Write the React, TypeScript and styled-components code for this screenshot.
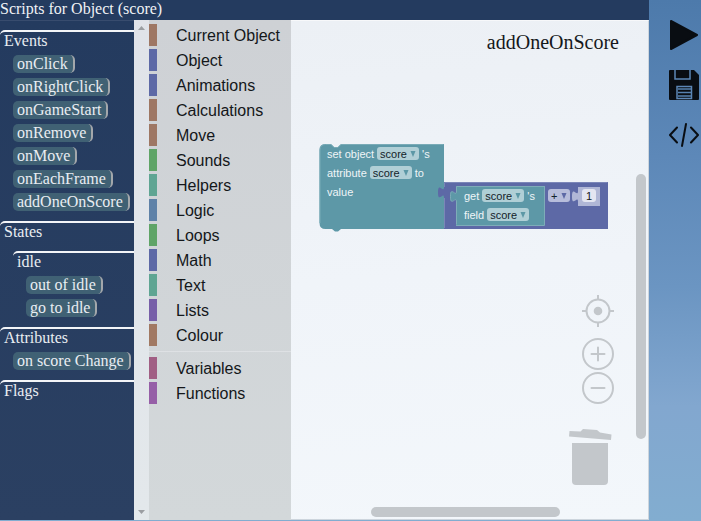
import React from "react";
import styled, { createGlobalStyle } from "styled-components";

const GlobalStyle = createGlobalStyle`
  *, *::before, *::after { box-sizing: border-box; }
  body { margin: 0; }
  button, input, select { font: inherit; color: inherit; margin: 0; }
`;

const serif = `"Liberation Serif", "Times New Roman", serif`;
const sans = `"Liberation Sans", Arial, sans-serif`;

const Page = styled.div`
  display: flex;
  height: 100vh;
  padding-bottom: 1px;
  font-family: ${serif};
  font-size: 16px;
  background: linear-gradient(180deg, #4d7aab 0%, #5d88b8 30%, #6b95c2 55%, #82a7cf 78%, #82add0 100%);
`;

const Editor = styled.main`
  flex: 1;
  min-width: 0;
  display: flex;
  flex-direction: column;
`;

const Header = styled.h1`
  margin: 0;
  height: 20px;
  line-height: 18px;
  font-size: 16px;
  font-weight: 400;
  color: #f0f2f5;
  background: #243b5f;
`;

const Body = styled.div`
  flex: 1;
  min-height: 0;
  display: flex;
`;

const Sidebar = styled.nav`
  width: 134px;
  padding-top: 9px;
  border-top: 1px solid #384c6e;
  background: linear-gradient(#243b5f, #2b4062);
  color: #e9edf2;
  overflow: hidden;
`;

const Section = styled.section<{ $nested?: boolean }>`
  margin-left: ${(p) => (p.$nested ? 13 : 0)}px;
  margin-top: ${(p) => (p.$nested ? 5 : 0)}px;
  padding-bottom: ${(p) => (p.$nested ? 0 : 5)}px;
  border-top: 2px solid #f3f5f8;
  border-top-left-radius: 5px;
`;

const SectionTitle = styled.h2`
  margin: 0;
  padding-left: 4px;
  height: 23px;
  line-height: 18px;
  font-size: 16px;
  font-weight: 400;
`;

const ScriptList = styled.ul`
  list-style: none;
  margin: 0;
  padding: 0 0 0 13px;
`;

const ScriptItem = styled.li`
  display: flex;
  height: 23px;
`;

const ScriptButton = styled.button`
  height: 18px;
  padding: 0 5px 0 4px;
  border: 0;
  border-right: 2px solid #a3a7ab;
  border-radius: 5px;
  background: #406174;
  line-height: 18px;
  white-space: nowrap;
  cursor: pointer;
`;

const ScrollGutter = styled.div`
  width: 15px;
  padding: 6px 4px;
  display: flex;
  flex-direction: column;
  justify-content: space-between;
  background: linear-gradient(#e0e3e9, #e3e8eb);
`;

const Toolbox = styled.ul`
  width: 142px;
  margin: 0;
  padding: 4px 0 0;
  list-style: none;
  font-family: ${sans};
  color: #14171a;
  background: linear-gradient(#ced1d5, #d3d8da);
`;

const Category = styled.li`
  height: 25px;
`;

const Separator = styled.li`
  height: 8px;
  padding-top: 2px;

  &::before {
    content: "";
    display: block;
    height: 1px;
    background: #dee1e4;
  }
`;

const CategoryButton = styled.button<{ $color: string }>`
  width: 100%;
  height: 22px;
  padding: 2px 0 0 19px;
  border: 0;
  border-left: 8px solid ${(p) => p.$color};
  background: none;
  text-align: left;
  line-height: 20px;
  white-space: nowrap;
  cursor: pointer;
`;

const Workspace = styled.section`
  flex: 1;
  min-width: 0;
  position: relative;
  border: 1px solid #cdd5dd;
  border-left: 0;
  border-top-color: #f7f8fa;
  background: linear-gradient(175deg, #ecf0f5, #f0f4f9 50%, #f3f7fb);
`;

const ScriptName = styled.h2`
  margin: 0;
  padding: 9px 29px 0 0;
  text-align: right;
  font-size: 20px;
  line-height: 24px;
  font-weight: 400;
  color: #15181b;
`;

const BlockGroup = styled.div`
  position: absolute;
  left: 28px;
  top: 123px;
  width: 290px;
  height: 88px;
  display: flex;
  font-family: ${sans};
  font-size: 11px;
  color: #eff5f7;
`;

const BlockShapes = styled.svg`
  position: absolute;
  inset: 0;
`;

const StatementBlock = styled.div`
  position: relative;
  width: 125px;
  padding-left: 8px;
`;

const MathBlock = styled.div`
  position: relative;
  display: flex;
  align-items: flex-start;
  padding: 42px 0 0 12px;
`;

const GetterBlock = styled.div`
  width: 88px;
  padding-left: 8px;
`;

const OperatorSlot = styled.div`
  width: 34px;
  padding-left: 4px;
`;

const BlockRow = styled.div`
  height: 19px;
  display: flex;
  align-items: center;
  gap: 3px;
  white-space: nowrap;
`;

const FieldWrap = styled.span`
  position: relative;
  display: flex;
`;

const FieldSelect = styled.select<{ $color: string }>`
  appearance: none;
  height: 13px;
  line-height: 12px;
  padding: 1px 12px 0 3px;
  border: 0;
  border-radius: 3px;
  background: ${(p) => p.$color};
  color: #14232a;
`;

const FieldArrow = styled.svg`
  position: absolute;
  right: 3px;
  top: 4px;
  pointer-events: none;
`;

const NumberInput = styled.input`
  width: 14px;
  height: 13px;
  margin-left: 4px;
  padding: 0;
  border: 0;
  border-radius: 3px;
  text-align: center;
  background: #e4e6f1;
  color: #15181b;
`;

const Controls = styled.div`
  position: absolute;
  right: 34px;
  bottom: 33px;
  display: flex;
  flex-direction: column;
  align-items: flex-end;
  gap: 2px;
`;

const ControlButton = styled.button<{ $gap?: number }>`
  display: flex;
  padding: 0;
  border: 0;
  margin-bottom: ${(p) => p.$gap ?? 0}px;
  background: none;
  color: #c3c7cb;
  cursor: pointer;
`;

const TrashIcon = styled.svg`
  margin-right: 2px;
`;

const VerticalBar = styled.div`
  position: absolute;
  right: 2px;
  top: 153px;
  bottom: 80px;
  width: 10px;
  border-radius: 5px;
  background: #c3c7cb;
`;

const HorizontalBar = styled.div`
  position: absolute;
  bottom: 2px;
  left: 80px;
  right: 88px;
  height: 10px;
  border-radius: 5px;
  background: #c3c7cb;
`;

const Rail = styled.aside`
  width: 52px;
  padding: 20px 2px 0 20px;
  display: flex;
  flex-direction: column;
  gap: 20px;
`;

const RailButton = styled.button`
  display: flex;
  width: 30px;
  height: 30px;
  padding: 0;
  border: 0;
  background: none;
  color: #090d12;
  cursor: pointer;
`;

const events = ["onClick", "onRightClick", "onGameStart", "onRemove", "onMove", "onEachFrame", "addOneOnScore"];

const categories = [
  { name: "Current Object", color: "#9e7764" },
  { name: "Object", color: "#5d69a6" },
  { name: "Animations", color: "#5d69a6" },
  { name: "Calculations", color: "#9e7764" },
  { name: "Move", color: "#9e7764" },
  { name: "Sounds", color: "#5fa467" },
  { name: "Helpers", color: "#5fa593" },
  { name: "Logic", color: "#5f82a8" },
  { name: "Loops", color: "#5fa467" },
  { name: "Math", color: "#5d69a6" },
  { name: "Text", color: "#5fa593" },
  { name: "Lists", color: "#775fa8" },
  { name: "Colour", color: "#a17963" },
];

const programCategories = [
  { name: "Variables", color: "#a15f84" },
  { name: "Functions", color: "#965fa7" },
];

function Scripts({ names }: { names: string[] }) {
  return (
    <ScriptList>
      {names.map((name) => (
        <ScriptItem key={name}>
          <ScriptButton type="button">{name}</ScriptButton>
        </ScriptItem>
      ))}
    </ScriptList>
  );
}

function Categories({ items }: { items: { name: string; color: string }[] }) {
  return (
    <>
      {items.map((c) => (
        <Category key={c.name}>
          <CategoryButton type="button" $color={c.color}>
            {c.name}
          </CategoryButton>
        </Category>
      ))}
    </>
  );
}

function Field({ value, label, math }: { value: string; label: string; math?: boolean }) {
  return (
    <FieldWrap>
      <FieldSelect aria-label={label} defaultValue={value} $color={math ? "#b7bddb" : "#b0cfd6"}>
        <option>{value}</option>
      </FieldSelect>
      <FieldArrow width="6" height="6" viewBox="0 0 6 6" aria-hidden="true">
        <path d="M0.500 0H5.500L3 6Z" fill={math ? "#5d69a6" : "#5c98a6"} />
      </FieldArrow>
    </FieldWrap>
  );
}

function Blocks() {
  return (
    <BlockGroup>
      <BlockShapes width="290" height="88" viewBox="0 0 290 88" aria-hidden="true">
        <path
          d="M0.500 6Q0.500 0 6.500 0H12L15 3H19L22 0H125V85H22L19 87.500H16L13 85H6.500Q0.500 85 0.500 79Z"
          fill="#5d98a7"
        />
        <path d="M1 79V6Q1 0.500 6.500 0.500H12L15 3.500H19L22 0.500H124.500" fill="none" stroke="#79abb7" />
        <path
          d="M125 38H289V85H125V54C125 46.500 119 60 119 48.500S125 50.400 125 43Z"
          fill="#5d69a6"
        />
        <path d="M125.500 84V54M125.500 43V38.500H288.500" fill="none" stroke="#7b86b8" />
        <path
          d="M137 42H225V81H137V58C137 50.500 131 64 131 52.500S137 54.400 137 47Z"
          fill="#5d98a7"
        />
        <path
          d="M137.500 80.500V58C137.500 50.500 131.500 64 131.500 52.500S137.500 54.400 137.500 47V42.500H225M225.500 42V81.500H137"
          fill="none"
          stroke="#7eacb8"
        />
        <path
          d="M259 43H281V62H259V58C259 50.500 253 64 253 52.500S259 54.400 259 47Z"
          fill="#b0b7d6"
        />
      </BlockShapes>
      <StatementBlock>
        <BlockRow>
          <span>set object</span>
          <Field value="score" label="Object" />
          <span>'s</span>
        </BlockRow>
        <BlockRow>
          <span>attribute</span>
          <Field value="score" label="Attribute" />
          <span>to</span>
        </BlockRow>
        <BlockRow>
          <span>value</span>
        </BlockRow>
      </StatementBlock>
      <MathBlock>
        <GetterBlock>
          <BlockRow>
            <span>get</span>
            <Field value="score" label="Source object" />
            <span>'s</span>
          </BlockRow>
          <BlockRow>
            <span>field</span>
            <Field value="score" label="Source field" />
          </BlockRow>
        </GetterBlock>
        <OperatorSlot>
          <BlockRow>
            <Field value="+" label="Operator" math />
          </BlockRow>
        </OperatorSlot>
        <BlockRow>
          <NumberInput aria-label="Number" defaultValue="1" />
        </BlockRow>
      </MathBlock>
    </BlockGroup>
  );
}

function WorkspaceControls() {
  return (
    <Controls>
      <ControlButton type="button" aria-label="Center blocks" $gap={9}>
        <svg width="32" height="32" viewBox="0 0 32 32" fill="none" stroke="currentColor" strokeWidth="2">
          <circle cx="16" cy="16" r="11.500" />
          <circle cx="16" cy="16" r="4.300" fill="currentColor" stroke="none" />
          <path d="M16 0V5M16 27V32M0 16H5M27 16H32" />
        </svg>
      </ControlButton>
      <ControlButton type="button" aria-label="Zoom in">
        <svg width="32" height="32" viewBox="0 0 32 32" fill="none" stroke="currentColor" strokeWidth="2">
          <circle cx="16" cy="16" r="15" />
          <path d="M9.500 16H22.500M16 9.500V22.500" strokeLinecap="round" />
        </svg>
      </ControlButton>
      <ControlButton type="button" aria-label="Zoom out" $gap={22}>
        <svg width="32" height="32" viewBox="0 0 32 32" fill="none" stroke="currentColor" strokeWidth="2">
          <circle cx="16" cy="16" r="15" />
          <path d="M9.500 16H22.500" strokeLinecap="round" />
        </svg>
      </ControlButton>
      <ControlButton type="button" aria-label="Delete blocks">
        <TrashIcon width="43" height="58" viewBox="0 0 43 58" fill="currentColor">
          <path d="M0.500 3L11.500 3.500L14 1L28 2L31 4.500L42.500 6.500L42 12L0 8.500Z" />
          <path d="M3 15H39V53Q39 57 35 57H7Q3 57 3 53Z" />
        </TrashIcon>
      </ControlButton>
    </Controls>
  );
}

export default function App() {
  return (
    <Page>
      <GlobalStyle />
      <Editor>
        <Header>Scripts for Object (score)</Header>
        <Body>
          <Sidebar aria-label="Scripts">
            <Section>
              <SectionTitle>Events</SectionTitle>
              <Scripts names={events} />
            </Section>
            <Section>
              <SectionTitle>States</SectionTitle>
              <Section $nested>
                <SectionTitle>idle</SectionTitle>
                <Scripts names={["out of idle", "go to idle"]} />
              </Section>
            </Section>
            <Section>
              <SectionTitle>Attributes</SectionTitle>
              <Scripts names={["on score Change"]} />
            </Section>
            <Section>
              <SectionTitle>Flags</SectionTitle>
            </Section>
          </Sidebar>
          <ScrollGutter aria-hidden="true">
            <svg width="7" height="4" viewBox="0 0 7 4">
              <path d="M0 4L3.500 0L7 4Z" fill="#9b9ea2" />
            </svg>
            <svg width="7" height="4" viewBox="0 0 7 4">
              <path d="M0 0H7L3.500 4Z" fill="#9b9ea2" />
            </svg>
          </ScrollGutter>
          <Toolbox>
            <Categories items={categories} />
            <Separator role="separator" />
            <Categories items={programCategories} />
          </Toolbox>
          <Workspace>
            <ScriptName>addOneOnScore</ScriptName>
            <Blocks />
            <WorkspaceControls />
            <VerticalBar />
            <HorizontalBar />
          </Workspace>
        </Body>
      </Editor>
      <Rail>
        <RailButton type="button" aria-label="Run">
          <svg width="30" height="30" viewBox="0 0 30 30">
            <path d="M2 1L28 15L2 29Z" fill="currentColor" stroke="currentColor" strokeWidth="2" strokeLinejoin="round" />
          </svg>
        </RailButton>
        <RailButton type="button" aria-label="Save">
          <svg width="30" height="30" viewBox="0 0 30 30" fill="none">
            <path d="M1 0H25L30 5V29Q30 30 29 30H1Q0 30 0 29V1Q0 0 1 0Z" fill="currentColor" />
            <path d="M6 0V9H21V0M8 16.500H22.500V28.500H8Z" stroke="#5c86b5" strokeWidth="1.500" />
            <path d="M9 19H22M9 22.500H22M9 26H22" stroke="#5681ae" strokeWidth="1.500" />
          </svg>
        </RailButton>
        <RailButton type="button" aria-label="View code">
          <svg width="30" height="30" viewBox="0 0 30 30" fill="none" stroke="currentColor" strokeWidth="2" strokeLinecap="round" strokeLinejoin="round">
            <path d="M8 7.500L1 15L8 22.500M22 7.500L29 15L22 22.500M17 4L13 26" />
          </svg>
        </RailButton>
      </Rail>
    </Page>
  );
}
